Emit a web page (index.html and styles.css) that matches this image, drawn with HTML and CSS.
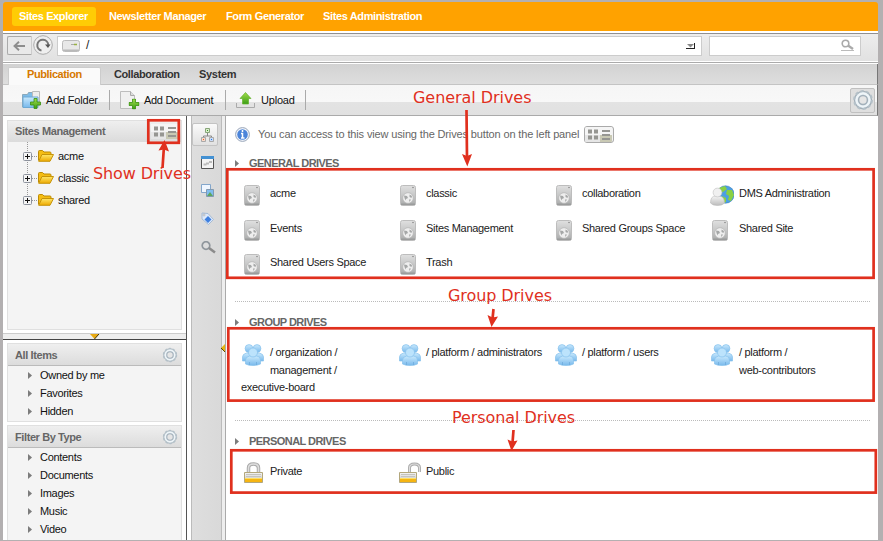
FILE: index.html
```
<!DOCTYPE html>
<html lang="en">
<head>
<meta charset="utf-8">
<title>Sites Explorer</title>
<link rel="stylesheet" href="styles.css">
</head>
<body>
<svg class="defs" width="0" height="0" aria-hidden="true">
  <defs>
    <linearGradient id="gDrive" x1="0" y1="0" x2="0" y2="1"><stop offset="0" stop-color="#e0e0e0"/><stop offset=".5" stop-color="#c6c7c7"/><stop offset="1" stop-color="#a8a9a9"/></linearGradient>
    <linearGradient id="gBlue" x1="0" y1="0" x2="0" y2="1"><stop offset="0" stop-color="#c9e9fd"/><stop offset="1" stop-color="#78b9ec"/></linearGradient>
    <linearGradient id="gGold" x1="0" y1="0" x2="0" y2="1"><stop offset="0" stop-color="#ffe76a"/><stop offset="1" stop-color="#eda900"/></linearGradient>
    <linearGradient id="gSilver" x1="0" y1="0" x2="0" y2="1"><stop offset="0" stop-color="#f5f5f5"/><stop offset="1" stop-color="#bcbcbc"/></linearGradient>
    <linearGradient id="gGreen" x1="0" y1="0" x2="0" y2="1"><stop offset="0" stop-color="#a1dc4c"/><stop offset="1" stop-color="#3b9e14"/></linearGradient>
    <symbol id="drive" viewBox="0 0 16 21"><rect x=".5" y=".5" width="15" height="20" rx="2" fill="url(#gDrive)" stroke="#bdbdbd"/><path d="M1 18.500h14V20H1z" fill="#9b9c9c"/><circle cx="8" cy="13" r="5.300" fill="#eee" stroke="#b5b5b5" stroke-width=".7"/><path d="M4 10.500l3 .5 1 2-2 1-.5 1.500-1-2.500zM9.500 9.500l2.500 1.500-.5 2-2-1zM9 14.500h2l-1.500 2.500z" fill="#a5a7a7"/><circle cx="13" cy="2.500" r=".8" fill="#888"/></symbol>
    <symbol id="people" viewBox="0 0 22 22"><g fill="url(#gBlue)" stroke="#86c1ed" stroke-width=".7"><path d="M.5 17v-4q0-3 4-4h4v8zM21.500 17v-4q0-3-4-4h-4v8z"/><circle cx="7" cy="4.500" r="3.900"/><circle cx="15" cy="4.500" r="3.900"/><path d="M3.500 20v-4q0-3 4-4h7q4 0 4 4v4q-3 1.500-7.500 1.500T3.500 20z"/><circle cx="11" cy="8.500" r="4.500" fill="#bce3fc"/></g><path d="M7.500 21v-3M14.500 21v-3" stroke="#6fabdc" stroke-width=".8"/></symbol>
    <symbol id="gear" viewBox="0 0 18 18"><circle cx="9" cy="9" r="7" fill="#dbe6ed" stroke="#a3afb8" stroke-width="1"/><circle cx="9" cy="9" r="7.300" fill="none" stroke="#b4c0c8" stroke-width="1.600" stroke-dasharray="2.600 1.987"/><circle cx="9" cy="9" r="5.300" fill="none" stroke="#eff5f8" stroke-width="1.500"/><circle cx="9" cy="9" r="3.600" fill="#e6e6e6" stroke="#a3b0ba" stroke-width="1.200"/></symbol>
    <symbol id="arrow" viewBox="0 0 4 7"><path d="M0 0L4 3.500 0 7z" fill="#7c7c7c"/></symbol>
    <symbol id="plusbox" viewBox="0 0 9 9"><rect x=".5" y=".5" width="8" height="8" rx="1" fill="#f4f4f4" stroke="#8d929d"/><path d="M2 4.500h5M4.500 2v5" stroke="#111"/></symbol>
    <symbol id="folder" viewBox="0 0 16 12"><path d="M.5 10.500v-9q0-1 1-1h3l1.500 1.500h6q1 0 1 1V5" fill="#f5bd13" stroke="#bd8b05"/><path d="M.7 11.300L4 4.500h11.500l-3.500 6.800z" fill="url(#gGold)" stroke="#c6940a"/></symbol>
    <symbol id="views" viewBox="0 0 27 15"><path d="M0 0h27v15H0z" fill="#f5f5f5"/><path d="M0 8h15v7H0z" fill="#e6e6e6"/><path d="M15 8h12v7H15z" fill="#c9c9b4"/><path d="M3 2.500h4v4H3zM9 2.500h4v4H9zM3 8.500h4v4H3zM9 8.500h4v4H9zM17 3h8v2h-8zM17 7h8v2h-8zM17 11h8v2h-8z" fill="#969692"/></symbol>
    <symbol id="plus" viewBox="0 0 11 11"><path d="M4 .5h3V4h3.500v3H7v3.500H4V7H.5V4H4z" fill="url(#gGreen)" stroke="#37900f" stroke-width=".8"/></symbol>
  </defs>
</svg>

<div class="window">
  <nav class="topnav">
    <a class="active">Sites Explorer</a><a class="n2">Newsletter Manager</a><a class="n3">Form Generator</a><a class="n4">Sites Administration</a>
  </nav>

  <div class="address">
    <div class="back"><svg width="13" height="10"><path d="M12 5H2M6 .8L1.500 5 6 9.200" fill="none" stroke="#8e8e8e" stroke-width="1.900"/></svg></div>
    <svg class="reload" width="20" height="20"><circle cx="10" cy="10" r="9.300" fill="#efefef" stroke="#aaa"/><path d="M8.500 15.600A5.500 5.500 0 1 1 15.300 10" fill="none" stroke="#777" stroke-width="2"/><path d="M12 9.500h5.500L15 13z" fill="#555"/></svg>
    <div class="path">
      <svg width="18" height="12"><rect x=".5" y=".5" width="17" height="11" rx="2" fill="#e8e8e8" stroke="#bbb"/><path d="M1 9.500h16v1.500H1z" fill="#b9b9b9"/><path d="M9 4.500h3" stroke="#aaa"/><path d="M12 4.500h3" stroke="#9ab344" stroke-width="1.500"/></svg>
      <span>/</span>
      <svg class="drop" width="10" height="7"><path d="M1 1h7L4.500 4.500z" fill="#888"/><path d="M0 5.500h9M8.500 0v6" fill="none" stroke="#222"/></svg>
    </div>
    <div class="search"><svg width="14" height="13"><circle cx="4.500" cy="4.500" r="3.300" fill="none" stroke="#aaa" stroke-width="1.600"/><path d="M7 6.500l5 3.500" stroke="#aaa" stroke-width="2.300"/><path d="M0 11.500h13" stroke="#bbb"/></svg></div>
  </div>

  <div class="tabs"><div class="tab on">Publication</div><div class="tab t2">Collaboration</div><div class="tab t3">System</div></div>

  <div class="tools">
    <div class="tool a"><svg width="20" height="19"><path d="M.5 16V3.500h5l1-2h7V16z" fill="#7dbce9" stroke="#8aa9bb"/><path d="M10.500.5h7v14h-7z" fill="#eee" stroke="#bbb"/><path d="M1 6h15v10.500H1z" fill="url(#gBlue)" stroke="#6ea9d3"/><use href="#plus" x="8" y="7" width="11" height="11"/></svg><span>Add Folder</span></div>
    <div class="tool b"><svg width="20" height="19"><path d="M.5.500h10l4 4v13H.5z" fill="#f0f0f0" stroke="#bdbdbd"/><path d="M10.500.5v4h4" fill="#ddd" stroke="#aaa"/><use href="#plus" x="8.500" y="7.500" width="11" height="11"/></svg><span>Add Document</span></div>
    <div class="tool c"><svg width="19" height="16"><path d="M.5 11v4.500h18V11" fill="none" stroke="#aaa"/><path d="M9.500.5L15 6.500h-2.500v5.500h-6V6.500H4z" fill="url(#gGreen)" stroke="#63b22b" stroke-width=".7"/></svg><span>Upload</span></div>
    <div class="bigear"><svg width="22" height="22"><use href="#gear" width="22" height="22"/></svg></div>
  </div>

  <div class="body">
    <aside class="left">
      <section class="box sites">
        <header><span>Sites Management</span><svg class="vw" width="27" height="15"><use href="#views"/></svg></header>
        <ul class="tree">
          <li><svg width="9" height="9"><use href="#plusbox"/></svg><i></i><svg width="16" height="12"><use href="#folder"/></svg><span>acme</span></li>
          <li><svg width="9" height="9"><use href="#plusbox"/></svg><i></i><svg width="16" height="12"><use href="#folder"/></svg><span>classic</span></li>
          <li><svg width="9" height="9"><use href="#plusbox"/></svg><i></i><svg width="16" height="12"><use href="#folder"/></svg><span>shared</span></li>
        </ul>
      </section>
      <div class="split"><svg width="10" height="6"><path d="M0 0h9L4.500 5z" fill="#e9aa12"/><path d="M9 0L4.500 5" stroke="#463508"/></svg></div>
      <section class="box items">
        <header><span>All Items</span><svg width="16" height="16"><use href="#gear"/></svg></header>
        <ul class="list">
          <li><svg width="4" height="7"><use href="#arrow"/></svg><span>Owned by me</span></li>
          <li><svg width="4" height="7"><use href="#arrow"/></svg><span>Favorites</span></li>
          <li><svg width="4" height="7"><use href="#arrow"/></svg><span>Hidden</span></li>
        </ul>
      </section>
      <section class="box filter">
        <header><span>Filter By Type</span><svg width="16" height="16"><use href="#gear"/></svg></header>
        <ul class="list">
          <li><svg width="4" height="7"><use href="#arrow"/></svg><span>Contents</span></li>
          <li><svg width="4" height="7"><use href="#arrow"/></svg><span>Documents</span></li>
          <li><svg width="4" height="7"><use href="#arrow"/></svg><span>Images</span></li>
          <li><svg width="4" height="7"><use href="#arrow"/></svg><span>Music</span></li>
          <li><svg width="4" height="7"><use href="#arrow"/></svg><span>Video</span></li>
        </ul>
      </section>
    </aside>

    <div class="rail">
      <div class="cell on"><svg width="13" height="14"><path d="M6.500 5v3M2.500 10V8h8v2" fill="none" stroke="#888"/><path d="M4.500.5h4v4h-4z" fill="#d9edcc" stroke="#87a578"/><path d="M.5 9.500h4v4h-4z" fill="#fbd8c6" stroke="#a9a9a9"/><path d="M8.500 9.500h4v4h-4z" fill="#c6daf9" stroke="#a9a9a9"/><path d="M2 11h1v1H2z" fill="#ed5f27"/><path d="M10 11h1v1h-1z" fill="#287be1"/><path d="M6 2h1v1H6z" fill="#369b20"/></svg></div>
      <div class="cell"><svg width="13" height="13"><path d="M.5.500h12v12H.5z" fill="#f4f4f4" stroke="#555"/><path d="M0 0h13v3H0z" fill="#4391d3"/><path d="M2.500 8.500h3M5 7.500h3M8 6h3" stroke="#bbb" stroke-width="2"/></svg></div>
      <div class="cell"><svg width="13" height="13"><path d="M.5.500h9v8h-9z" fill="#eff6ff" stroke="#83a6cb"/><path d="M5.500 5.500h7v7h-7z" fill="#80bdf0" stroke="#839ab0"/><path d="M6 12l3-4 3 4z" fill="#5da65b"/></svg></div>
      <div class="cell"><svg width="13" height="13"><path d="M1 1l6 .5 5.500 6-5 5L1 7z" fill="#dce9fb" stroke="#a6bbd5"/><path d="M7 4l3.500 3.500L7 11 3.500 7.500z" fill="#3f80df"/><circle cx="3" cy="3" r="1" fill="#fff" stroke="#888" stroke-width=".5"/></svg></div>
      <div class="cell"><svg width="15" height="13"><circle cx="5" cy="4.500" r="3.800" fill="#ddd" stroke="#8f969c" stroke-width="1.700"/><path d="M8 7l6 4.500" stroke="#8b8b8b" stroke-width="2.500"/></svg></div>
    </div>
    <div class="grip"><svg width="4" height="8"><path d="M4 0v8L0 4z" fill="#e5b512"/><path d="M0 4l4 4" stroke="#5e4700"/></svg></div>

    <main>
      <p class="note"><svg width="15" height="15"><circle cx="7.500" cy="7.500" r="6.900" fill="#f2f6fc" stroke="#99a5b8"/><circle cx="7.500" cy="7.500" r="5.300" fill="#4b84d9"/><path d="M7.500 3v2M6 6.500h1.500v4M6 11h3.500" fill="none" stroke="#fff" stroke-width="1.500"/></svg><span>You can access to this view using the Drives button on the left panel</span><b class="vbtn"><svg width="27" height="15"><use href="#views"/></svg></b></p>

      <section class="group general">
        <h2><svg width="4" height="7"><use href="#arrow"/></svg><span>GENERAL DRIVES</span></h2>
        <div class="grid">
          <div class="item"><svg class="dr" width="16" height="21"><use href="#drive"/></svg>acme</div>
          <div class="item"><svg class="dr" width="16" height="21"><use href="#drive"/></svg>classic</div>
          <div class="item"><svg class="dr" width="16" height="21"><use href="#drive"/></svg>collaboration</div>
          <div class="item"><svg class="ppl dms" width="24" height="21"><circle cx="15.500" cy="9.500" r="8.700" fill="#4d9fe2" stroke="#3a80be" stroke-width=".6"/><path d="M9 3l6-2 2 3-4 3-3 1zM17 5l5 0 2 5-3 6-3-1 1-4-3-2zM12 11l4 2v4l-2 1z" fill="#8ad044"/><path d="M.5 18q0-7 5-7h3q6 0 6 7-2 2.500-7 2.500T.5 18z" fill="url(#gSilver)" stroke="#bbb" stroke-width=".6"/><circle cx="7.500" cy="7.500" r="4.400" fill="#f0f0f0" stroke="#c0c0c0" stroke-width=".6"/></svg>DMS Administration</div>
          <div class="item"><svg class="dr" width="16" height="21"><use href="#drive"/></svg>Events</div>
          <div class="item"><svg class="dr" width="16" height="21"><use href="#drive"/></svg>Sites Management</div>
          <div class="item"><svg class="dr" width="16" height="21"><use href="#drive"/></svg>Shared Groups Space</div>
          <div class="item"><svg class="dr" width="16" height="21"><use href="#drive"/></svg>Shared Site</div>
          <div class="item"><svg class="dr" width="16" height="21"><use href="#drive"/></svg>Shared Users Space</div>
          <div class="item"><svg class="dr" width="16" height="21"><use href="#drive"/></svg>Trash</div>
        </div>
      </section>

      <section class="group teams">
        <h2><svg width="4" height="7"><use href="#arrow"/></svg><span>GROUP DRIVES</span></h2>
        <div class="grid">
          <div class="item"><svg class="ppl" width="22" height="22"><use href="#people"/></svg>/ organization /<br>management /<br>executive-board</div>
          <div class="item"><svg class="ppl" width="22" height="22"><use href="#people"/></svg>/ platform / administrators</div>
          <div class="item"><svg class="ppl" width="22" height="22"><use href="#people"/></svg>/ platform / users</div>
          <div class="item"><svg class="ppl" width="22" height="22"><use href="#people"/></svg>/ platform /<br>web-contributors</div>
        </div>
      </section>

      <section class="group personal">
        <h2><svg width="4" height="7"><use href="#arrow"/></svg><span>PERSONAL DRIVES</span></h2>
        <div class="grid">
          <div class="item"><svg class="dr" width="19" height="21"><path d="M4.500 11V6q0-4 5-4t5 4v5" fill="none" stroke="#aaa" stroke-width="3.500"/><path d="M4.500 11V6q0-4 5-4t5 4v5" fill="none" stroke="#ddd" stroke-width="1.500"/><path d="M.5 10.500h18v10H.5z" fill="url(#gSilver)" stroke="#b3a77c"/><path d="M2 12.500h15M2 14.500h15" stroke="#c4c4be"/><path d="M1 16h17v4H1z" fill="#f6b512"/><path d="M1 16.500h17" stroke="#ffe064"/></svg>Private</div>
          <div class="item"><svg class="ppl" width="22" height="21"><path d="M10.500 11V6q0-4 5-4t5 4v4" fill="none" stroke="#aaa" stroke-width="3"/><path d="M10.500 11V6q0-4 5-4t5 4v4" fill="none" stroke="#ddd" stroke-width="1.200"/><path d="M.5 10.500h17v10H.5z" fill="url(#gSilver)" stroke="#b3a77c"/><path d="M2 12.500h14M2 14.500h14" stroke="#c4c4be"/><path d="M1 16h16v4H1z" fill="#f6b512"/><path d="M1 16.500h16" stroke="#ffe064"/></svg>Public</div>
        </div>
      </section>
    </main>
  </div>
</div>

<svg class="callouts" width="883" height="541" viewBox="0 0 883 541">
  <g fill="none" stroke="#e0301e" stroke-width="2.700">
    <rect x="148.300" y="120.300" width="30.500" height="22.500"/>
    <rect x="227.300" y="169.300" width="646.300" height="108.500"/>
    <rect x="228.300" y="328.300" width="645.300" height="72.300"/>
    <rect x="231.300" y="450.300" width="644.500" height="42.300"/>
    <path d="M466.500 110l.5 48M493.500 309l-1 10M513.500 430l-1 13M162.500 168l1.500-22"/>
  </g>
  <g fill="#e0301e">
    <path d="M467.300 166.500L462 154l5 2 5-2z"/>
    <path d="M491.500 327l-4-12 5 2.500 5.500-1z"/>
    <path d="M511.500 451l-4-11.500 5 2 5-1z"/>
    <path d="M164.500 140l4.500 11.500-5-2-5.500 1z"/>
  </g>
  <g class="labels">
    <text x="413" y="103" textLength="118.500">General Drives</text>
    <text x="448" y="301" textLength="104">Group Drives</text>
    <text x="452" y="423" textLength="123">Personal Drives</text>
    <text x="93" y="179" textLength="98">Show Drives</text>
  </g>
</svg>
</body>
</html>
```
FILE: styles.css
```
* { box-sizing: border-box; }
body { margin: 0; width: 883px; height: 541px; overflow: hidden; background: #b3b0b1; font: 11px "Liberation Sans", Arial, sans-serif; letter-spacing: -.3px; color: #222; position: relative; }
svg { display: block; flex: none; }
ul, h2, p { margin: 0; padding: 0; list-style: none; }
span, .item, a, .tab { white-space: nowrap; }
.defs { position: absolute; }
.window { margin: 0 5px 0 3px; padding-top: 2px; height: 540px; display: flex; flex-direction: column; overflow: hidden; }

.topnav { height: 29px; flex: none; background: #ffa200; display: flex; align-items: center; padding-left: 9px; border-radius: 3px 3px 0 0; color: #fff; font-weight: bold; letter-spacing: -.37px; }
.topnav a { height: 19px; line-height: 19px; }
.topnav .active { width: 84px; padding-left: 7px; border-radius: 3px; background: #ffcc05; }
.topnav .n2 { margin-left: 13px; width: 117px; }
.topnav .n3 { width: 97px; }

.address { height: 33px; flex: none; display: flex; align-items: flex-start; padding: 3px 0 0 4px; border-top: 2px solid #fff; background: linear-gradient(#909090 1px, #ededed 1px, #e1e1e1 28px, #fff 28px, #fff 29px, #aaa 29px, #aaa 30px, #fff 30px); }
.back { width: 25px; height: 19px; border: 1px solid #aaa; border-right-color: #ccc; border-radius: 2px 0 0 2px; display: flex; align-items: center; justify-content: center; background: #e9e9e9; }
.reload { margin: -1px 0 0 1px; }
.path { width: 645px; height: 20px; margin-left: 4px; border: 1px solid #ccc; background: #fff; display: flex; align-items: center; padding: 0 5px 0 4px; font-size: 12px; }
.path span { margin: -2px 0 0 6px; }
.drop { margin-left: auto; }
.search { width: 152px; height: 20px; margin-left: 7px; border: 1px solid #ccc; background: #fff; display: flex; justify-content: flex-end; padding: 2px 5px 0 0; }

.tabs { height: 21px; flex: none; display: flex; background: linear-gradient(#d2d2d2, #dedede); border-bottom: 1px solid #c4c4c4; border-right: 1px solid #777; font-weight: bold; color: #333; line-height: 20px; letter-spacing: -.4px; }
.tab.on { width: 93px; margin: 3px 0 -1px 5px; padding-left: 18px; background: #fafafa; border: 1px solid #ccc; border-bottom: 0; border-radius: 2px 2px 0 0; color: #d67900; line-height: 13px; }
.tab.t2 { width: 85px; margin-left: 13px; }
.tab.t3 { letter-spacing: -.3px; }
.tools { height: 31px; flex: none; display: flex; align-items: center; border-bottom: 1px solid #aaa; border-right: 1px solid #777; background: linear-gradient(#f6f6f6, #f8f8f8 17px, #e3e3e3 17px, #e1e1e1); color: #111; }
.tool { display: flex; align-items: center; height: 20px; border-right: 1px solid #aaa; }
.tool.a { margin-left: 19px; width: 88px; letter-spacing: -.2px; }
.tool.b { padding-left: 10px; width: 116px; }
.tool.c { padding-left: 10px; width: 80px; }
.tool span { margin: -1px 0 0 4px; }
.tool.c span { margin-left: 6px; letter-spacing: -.2px; }
.bigear { margin-left: auto; margin-right: 2px; width: 25px; height: 25px; border: 1px solid #c0c0c0; background: #dfdfdf; border-radius: 2px; display: flex; align-items: center; justify-content: center; }

.body { flex: 1; display: flex; min-height: 0; background: #fff; }
.left { width: 184px; border-right: 1px solid #555; }
.box { width: 175px; margin-left: 4px; border: 1px solid #e0e0e0; background: #f4f4f4; }
.box header { height: 22px; display: flex; align-items: center; justify-content: space-between; padding: 0 3px 0 7px; background: linear-gradient(#efefef, #dcdcdc); border-bottom: 1px solid #bbb; font-weight: bold; color: #666; letter-spacing: -.4px; }
.sites { height: 210px; margin-top: 4px; }
.sites header { height: 21px; border-bottom-color: #dcdcdc; }
.tree { margin-left: 19px; padding-top: 3px; background: repeating-linear-gradient(#999 0 1px, transparent 1px 2px) 0 0 / 1px 57px no-repeat; }
.tree li { display: flex; align-items: center; height: 22px; color: #111; }
.tree li > svg:first-child { margin-left: -4px; }
.tree i { width: 5px; margin: 0 1px 0 0; border-top: 1px dotted #999; }
.tree span { margin-left: 4px; }
.split { height: 7px; margin: 3px 0; border-top: 1px solid #ccc; border-bottom: 1px solid #444; background: #eee; display: flex; justify-content: center; }
.items { height: 79px; }
.filter { height: 160px; margin-top: 3px; }
.list { padding-left: 20px; }
.list li { display: flex; align-items: center; height: 18px; color: #111; }
.list span { margin-left: 8px; }

.rail { width: 31px; margin-left: 4px; border: solid #bbb; border-width: 0 1px; background: linear-gradient(90deg, #dedede, #d9d9d9); padding-top: 7px; }
.cell { height: 28.400px; padding-left: 9px; display: flex; align-items: center; }
.cell.on { height: 23px; margin: 0 3px 2px 0; border: 1px solid #c3c3c3; border-radius: 2px; background: linear-gradient(#fafafa, #e1e1e1); padding-left: 8px; }
.grip { width: 4px; background: #eee; border-right: 1px solid #aaa; padding-top: 228px; }
.grip svg { margin-left: -1px; }

main { flex: 1; min-width: 0; padding-left: 9px; }
.note { height: 36px; display: flex; align-items: center; color: #666; letter-spacing: -.14px; }
.note > span { margin: -1px 0 0 8px; width: 326px; }
.vbtn { height: 17px; width: 30px; border: 1px solid #aaa; border-radius: 3px; overflow: hidden; background: #f2f2f2; }
.group h2 { height: 18px; display: flex; align-items: center; font-size: 11px; font-weight: bold; color: #666; letter-spacing: -.55px; }
.group h2 span { margin-left: 10px; }
.group { margin-right: 8px; border-bottom: 1px dotted #bbb; }
.grid { display: grid; grid-template-columns: 156px 156px 156px 157px; padding-left: 6px; line-height: 17.500px; }
.item:nth-child(4n) { padding-left: 1px; }
.dr { float: left; margin: 0 10px 0 3px; }
.ppl { float: left; margin: 0 5px 0 2px; }
.general { height: 150px; padding-top: 2px; }
.general .grid { margin-top: 13px; grid-auto-rows: 34.600px; }
.item:nth-child(4n) .dr { margin-left: 2px; margin-right: 11px; }
.ppl.dms { margin: 0 5px 0 0; }
.teams { height: 119px; padding-top: 11px; }
.teams .grid { margin-top: 13px; }
.teams .item:first-child .ppl { margin: 0 6px 0 1px; }
.teams .item:nth-child(4) .ppl { margin: 0 6px 0 1px; }
.personal { padding-top: 11px; border: 0; }
.personal .grid { margin-top: 13px; }
.personal .dr { margin: -1px 7px 0 3px; }
.personal .ppl { margin-top: -1px; }

.callouts { position: absolute; left: 0; top: 0; }
.labels { font: 16px "DejaVu Sans", sans-serif; letter-spacing: 0; fill: #e0301e; }
```
